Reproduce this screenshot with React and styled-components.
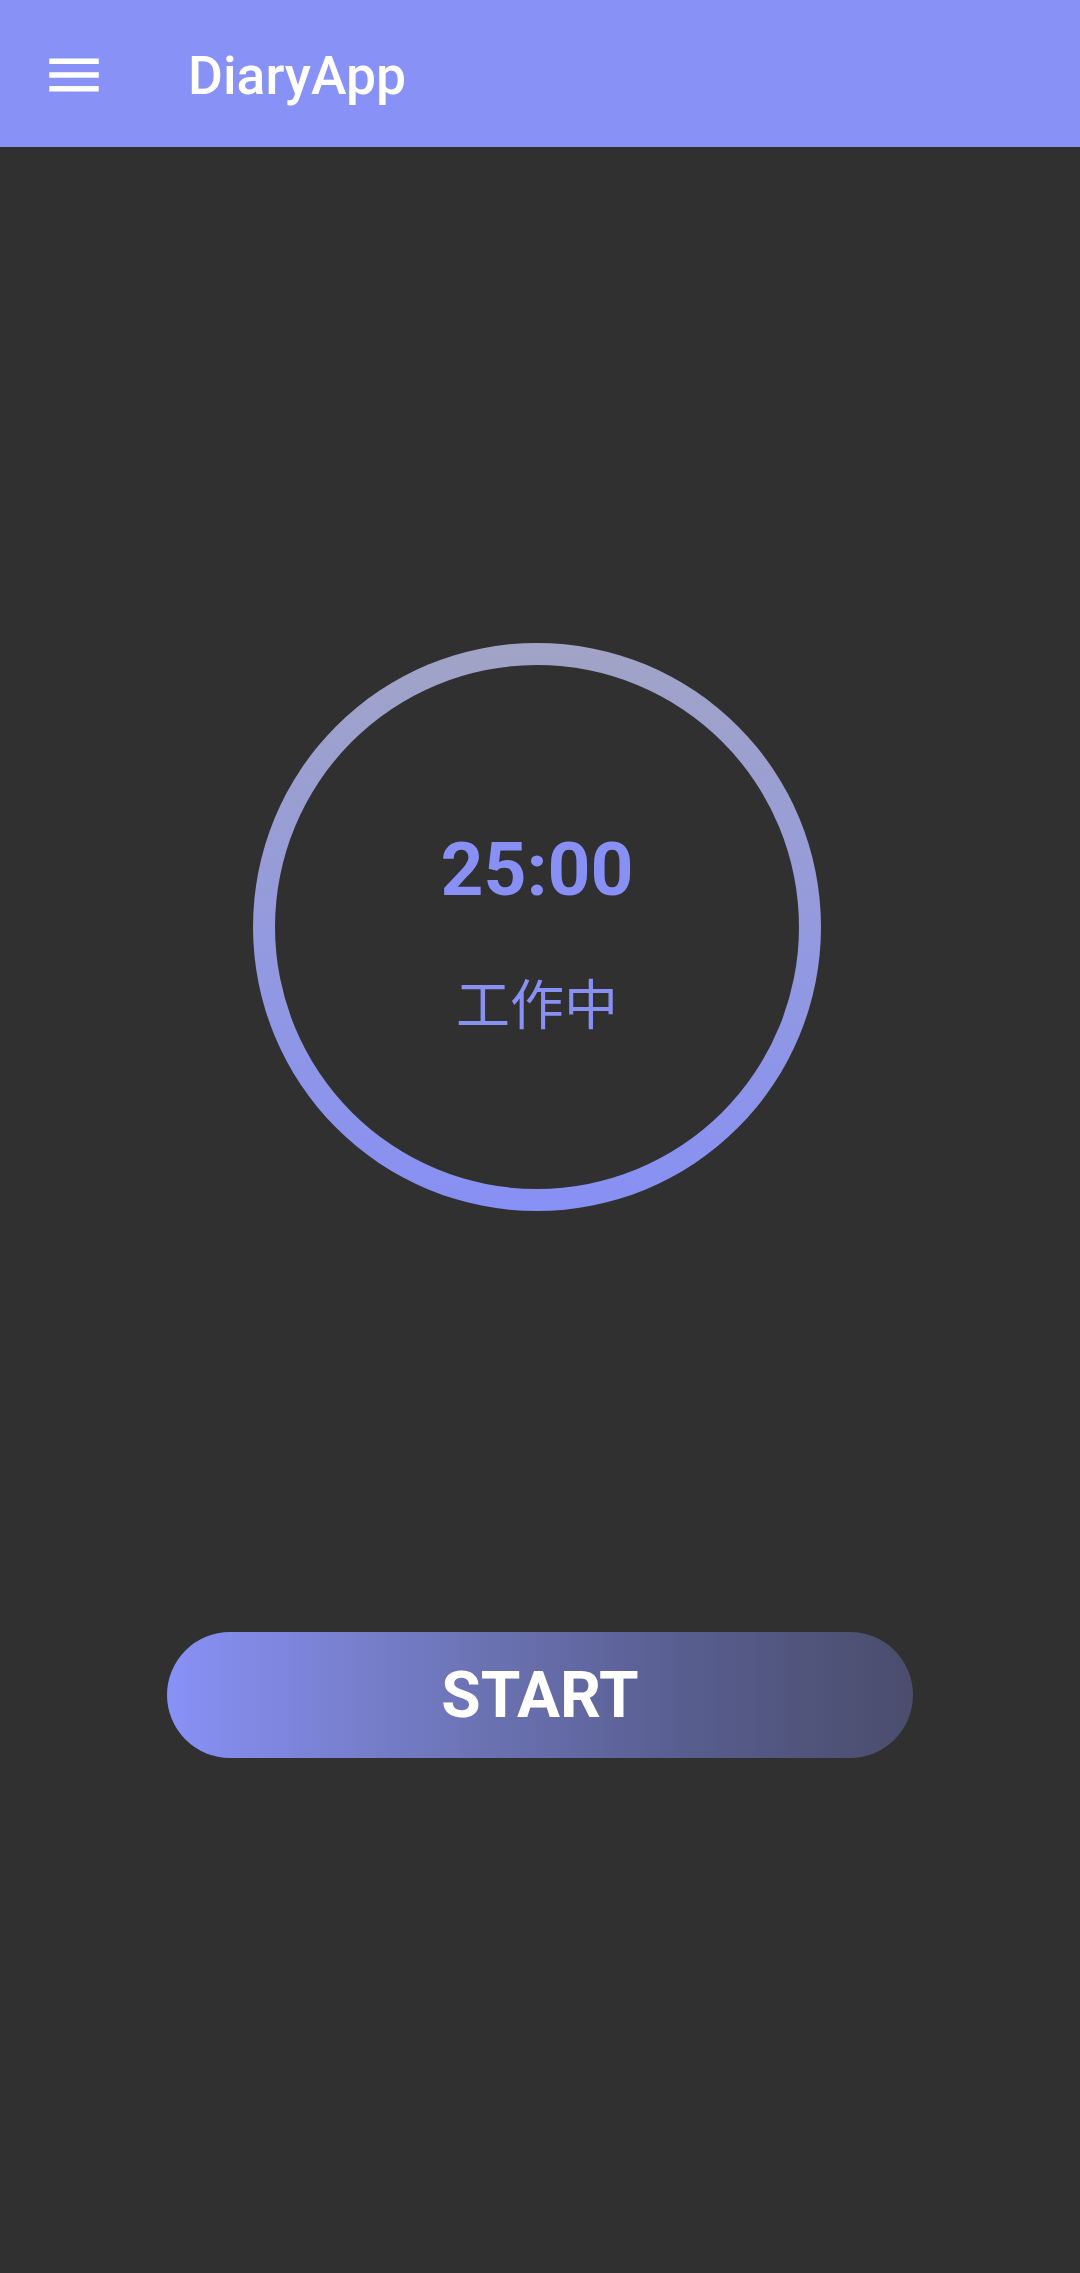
import React from "react";
import styled, { createGlobalStyle } from "styled-components";

const Global = createGlobalStyle`
  html, body { margin: 0; padding: 0; background: #303030; }
  body { font-family: Roboto, "Noto Sans", sans-serif; }
  * { box-sizing: border-box; }
`;

const Page = styled.div`
  width: 1080px;
  min-height: 2273px;
  background: #303030;
  display: flex;
  flex-direction: column;
`;

const AppBar = styled.header`
  height: 147px;
  background: #8892f6;
  display: flex;
  align-items: center;
  padding-left: 41px;
  padding-top: 3px;
  gap: 81px;
`;

const MenuButton = styled.button`
  width: 66px;
  height: 66px;
  padding: 0;
  border: none;
  background: transparent;
  display: flex;
  align-items: center;
  justify-content: center;
  color: #ffffff;
`;

const Title = styled.h1`
  margin: 0;
  font-family: Roboto, sans-serif;
  font-weight: 500;
  font-size: 53.5px;
  color: #ffffff;
`;

const Main = styled.main`
  display: flex;
  flex-direction: column;
  align-items: center;
  padding-top: 496px;
  gap: 421px;
`;

const Ring = styled.div`
  width: 568px;
  height: 568px;
  margin-right: 6px;
  border-radius: 50%;
  border: 22px solid transparent;
  padding-top: 6px;
  background:
    linear-gradient(#303030, #303030) padding-box,
    linear-gradient(to bottom, #a1a4c6, #8790f4) border-box;
  display: flex;
  flex-direction: column;
  align-items: center;
  justify-content: center;
  gap: 68px;
`;

const Time = styled.div`
  font-family: Roboto, sans-serif;
  font-weight: 700;
  font-size: 75px;
  line-height: 1;
  color: #8890f5;
`;

const Status = styled.div`
  font-family: "Noto Sans CJK SC", "Noto Sans CJK JP", sans-serif;
  font-weight: 400;
  font-size: 54px;
  line-height: 1;
  color: #8890f2;
`;

const StartButton = styled.button`
  width: 746px;
  height: 126px;
  border: none;
  border-radius: 63px;
  background: linear-gradient(to right, #8891f6 0%, #6d74b6 40%, #575d8e 70%, #4a4d6c 100%);
  color: #ffffff;
  font-family: Roboto, sans-serif;
  font-weight: 700;
  font-size: 64px;
  display: flex;
  align-items: center;
  justify-content: center;
  padding: 0;
`;

function MenuIcon() {
  return (
    <svg width="66" height="66" viewBox="0 0 24 24" fill="currentColor">
      <rect x="3" y="6" width="18" height="2" />
      <rect x="3" y="11" width="18" height="2" />
      <rect x="3" y="16" width="18" height="2" />
    </svg>
  );
}

export default function App() {
  return (
    <>
      <Global />
      <Page>
        <AppBar>
          <MenuButton aria-label="menu">
            <MenuIcon />
          </MenuButton>
          <Title>DiaryApp</Title>
        </AppBar>
        <Main>
          <Ring>
            <Time>25:00</Time>
            <Status>工作中</Status>
          </Ring>
          <StartButton>START</StartButton>
        </Main>
      </Page>
    </>
  );
}
